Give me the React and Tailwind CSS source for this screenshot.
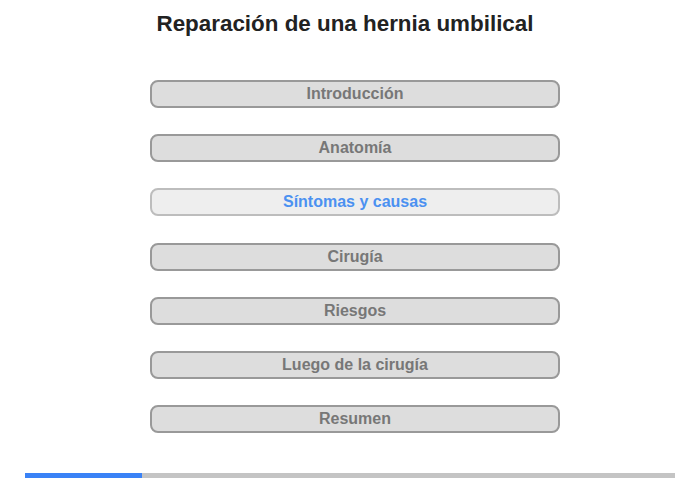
const ITEMS = [
  'Introducción',
  'Anatomía',
  'Síntomas y causas',
  'Cirugía',
  'Riesgos',
  'Luego de la cirugía',
  'Resumen',
]

const ACTIVE = 2

export default function App() {
  return (
    <div className="w-[700px] h-[480px] bg-white font-['Liberation_Sans',Arial,sans-serif] flex flex-col">
      <h1 className="pt-[11px] text-center text-[22.4px] font-bold text-[#222] pr-[10px] leading-[26px]">
        Reparación de una hernia umbilical
      </h1>

      <div className="mt-[43px] flex flex-col gap-[26.2px] pl-[150px]">
        {ITEMS.map((item, i) => (
          <div
            key={item}
            className={
              i === ACTIVE
                ? 'w-[410px] h-[28px] rounded-[8px] border-2 border-[#bdbdbd] bg-[#eeeeee] text-[#4b91f1] text-[16px] font-bold flex items-center justify-center'
                : 'w-[410px] h-[28px] rounded-[8px] border-2 border-[#999999] bg-[#dddddd] text-[#777777] text-[16px] font-bold flex items-center justify-center'
            }
          >
            {item}
          </div>
        ))}
      </div>

      <div className="mt-auto mb-[2px] mx-[25px] h-[5px] bg-[#c4c4c4] flex">
        <div className="w-[117px] h-full bg-[#3a82f6]" />
      </div>
    </div>
  )
}
